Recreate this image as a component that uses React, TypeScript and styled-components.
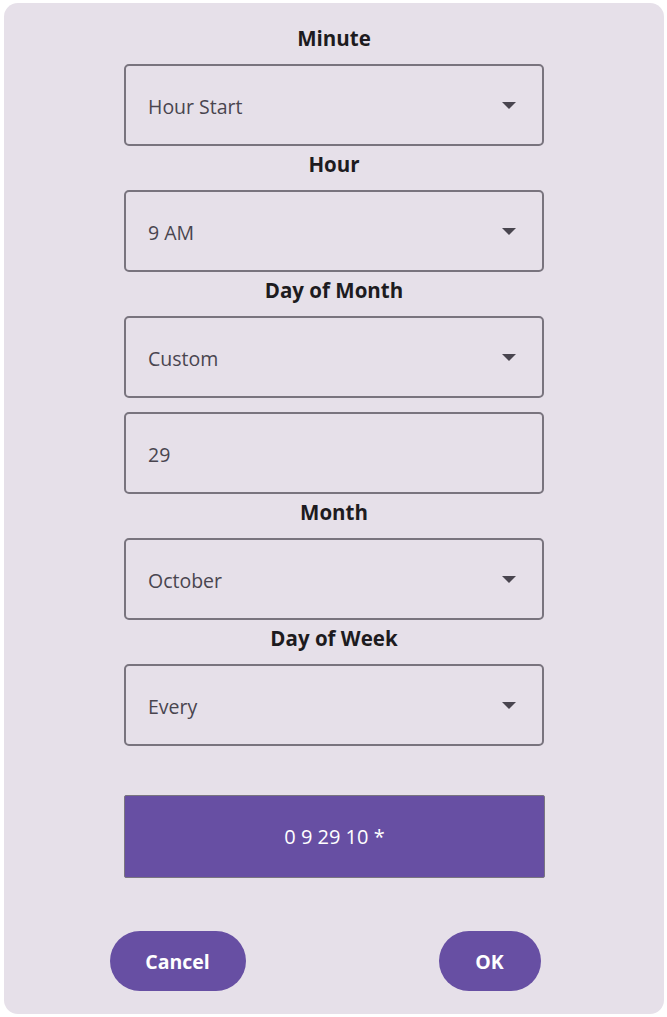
import React from "react";
import styled, { createGlobalStyle } from "styled-components";

const Global = createGlobalStyle`
  html, body { margin: 0; padding: 0; background: #ffffff; }
  body { font-family: "Open Sans", "Noto Sans", sans-serif; }
  * { box-sizing: border-box; }
`;

const Page = styled.div`
  padding: 3px 3px 3px 4px;
  width: 667px;
  height: 1017px;
`;

const Card = styled.div`
  width: 660px;
  height: 1011px;
  background: #e6e0e9;
  border-radius: 14px;
  display: flex;
  flex-direction: column;
  align-items: center;
  padding-top: 21px;
`;

const Column = styled.div`
  width: 420px;
  display: flex;
  flex-direction: column;
`;

const Label = styled.div<{ $first?: boolean }>`
  height: 28px;
  line-height: 28px;
  margin-top: ${(p) => (p.$first ? "0" : "4px")};
  margin-bottom: 12px;
  text-align: center;
  font-weight: 700;
  font-size: 20.5px;
  color: #1d1b20;
`;

const Field = styled.div<{ $gapTop?: boolean }>`
  height: 82px;
  border: 2px solid #79747e;
  border-radius: 5px;
  display: flex;
  align-items: center;
  justify-content: space-between;
  padding: 3px 26px 0 22px;
  margin-top: ${(p) => (p.$gapTop ? "14px" : "0")};
  font-size: 19.5px;
  color: #49454f;
`;

const Arrow = styled.span`
  width: 0;
  height: 0;
  border-left: 7px solid transparent;
  border-right: 7px solid transparent;
  border-top: 7px solid #49454f;
  margin-top: -3px;
`;

const Result = styled.div`
  width: 421px;
  height: 83px;
  margin-top: 49px;
  background: #674fa3;
  border: 1px solid #7a7680;
  border-radius: 2px;
  display: flex;
  align-items: center;
  justify-content: center;
  color: #ffffff;
  font-size: 20px;
`;

const Buttons = styled.div`
  width: 431px;
  margin-top: 53px;
  margin-left: -18px;
  display: flex;
  justify-content: space-between;
`;

const Button = styled.button<{ $w: number }>`
  width: ${(p) => p.$w}px;
  height: 60px;
  border: none;
  border-radius: 30px;
  background: #674fa3;
  color: #ffffff;
  font-family: "Open Sans", "Noto Sans", sans-serif;
  font-weight: 700;
  font-size: 19.5px;
  cursor: pointer;
`;

function Select({ value }: { value: string }) {
  return (
    <Field>
      <span>{value}</span>
      <Arrow />
    </Field>
  );
}

export default function App() {
  return (
    <Page>
      <Global />
      <Card>
        <Column>
          <Label $first>Minute</Label>
          <Select value="Hour Start" />
          <Label>Hour</Label>
          <Select value="9 AM" />
          <Label>Day of Month</Label>
          <Select value="Custom" />
          <Field $gapTop>
            <span>29</span>
          </Field>
          <Label>Month</Label>
          <Select value="October" />
          <Label>Day of Week</Label>
          <Select value="Every" />
          <Result>0 9 29 10 *</Result>
        </Column>
        <Buttons>
          <Button $w={136}>Cancel</Button>
          <Button $w={102}>OK</Button>
        </Buttons>
      </Card>
    </Page>
  );
}
